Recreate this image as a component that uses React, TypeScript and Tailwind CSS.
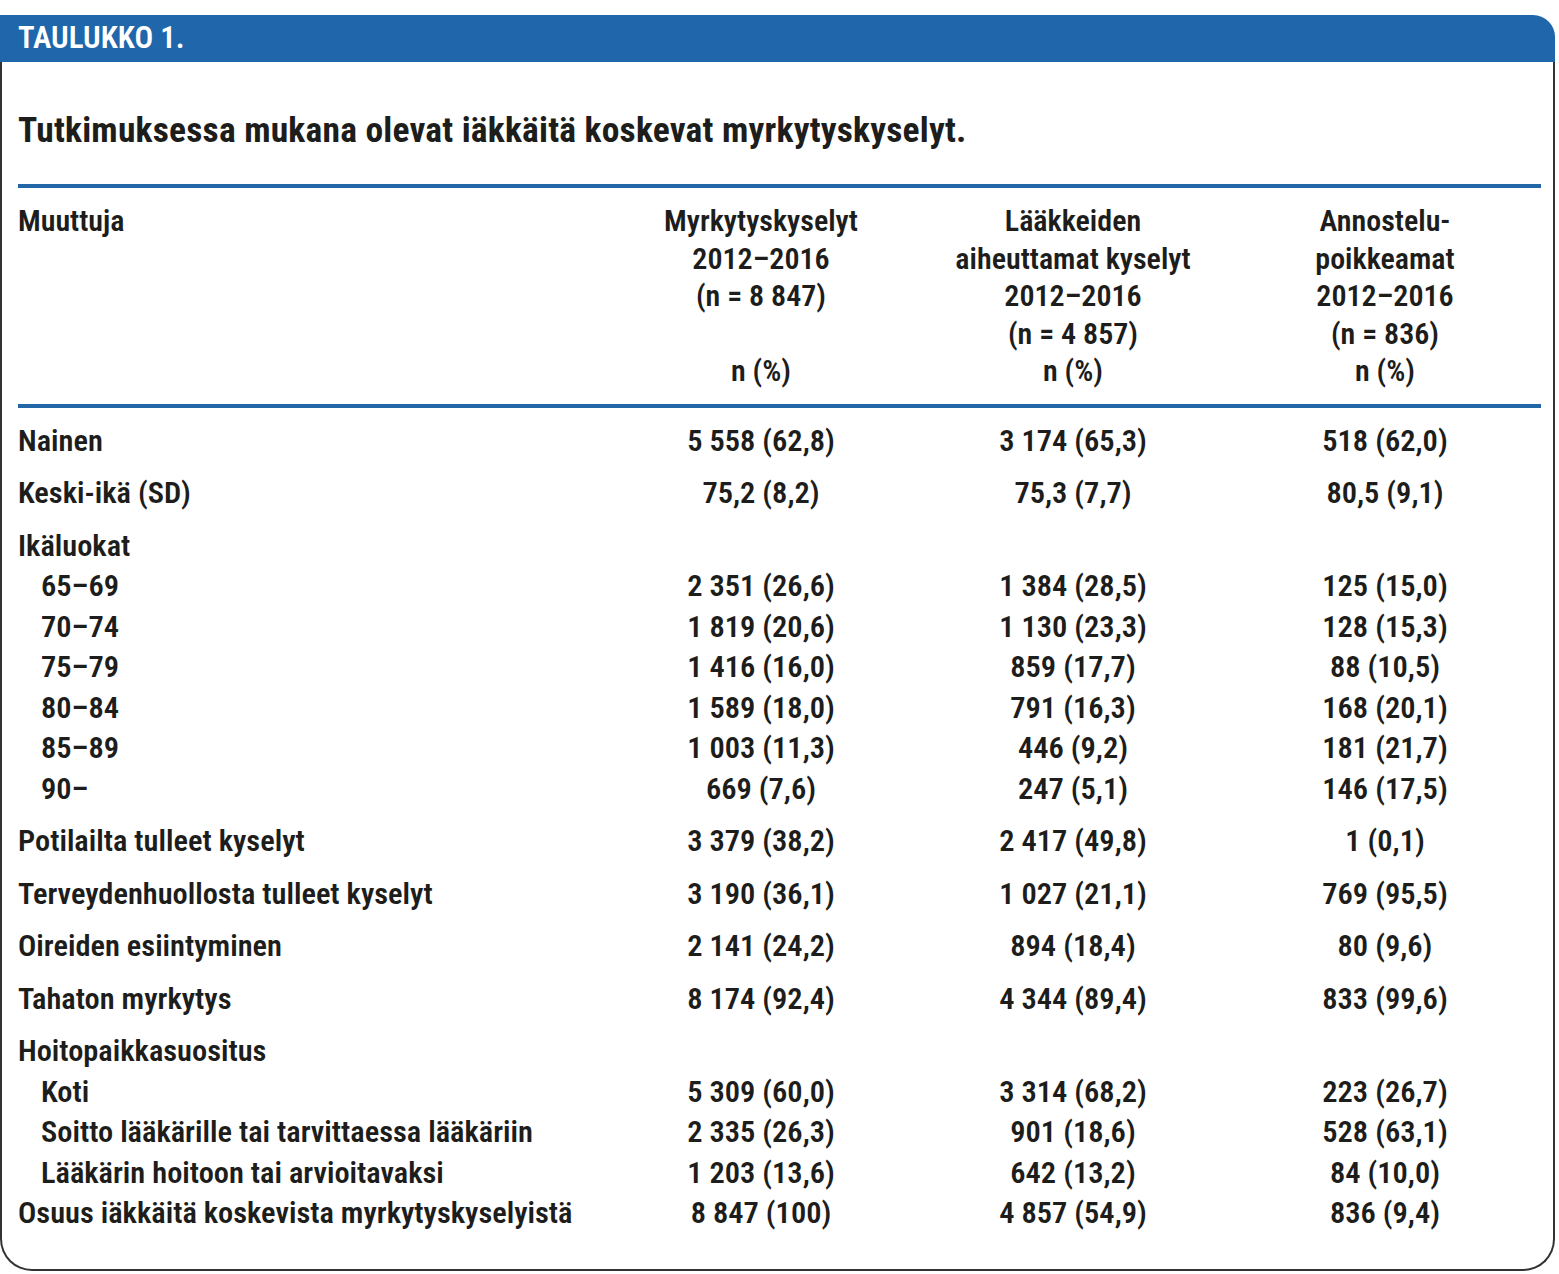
const rows: { label: string; vals: string[]; sub?: boolean; gap?: boolean }[] = [
  { label: 'Nainen', vals: ['5 558 (62,8)', '3 174 (65,3)', '518 (62,0)'] },
  { label: 'Keski-ikä (SD)', vals: ['75,2 (8,2)', '75,3 (7,7)', '80,5 (9,1)'], gap: true },
  { label: 'Ikäluokat', vals: ['', '', ''], gap: true },
  { label: '65–69', vals: ['2 351 (26,6)', '1 384 (28,5)', '125 (15,0)'], sub: true },
  { label: '70–74', vals: ['1 819 (20,6)', '1 130 (23,3)', '128 (15,3)'], sub: true },
  { label: '75–79', vals: ['1 416 (16,0)', '859 (17,7)', '88 (10,5)'], sub: true },
  { label: '80–84', vals: ['1 589 (18,0)', '791 (16,3)', '168 (20,1)'], sub: true },
  { label: '85–89', vals: ['1 003 (11,3)', '446 (9,2)', '181 (21,7)'], sub: true },
  { label: '90–', vals: ['669 (7,6)', '247 (5,1)', '146 (17,5)'], sub: true },
  { label: 'Potilailta tulleet kyselyt', vals: ['3 379 (38,2)', '2 417 (49,8)', '1 (0,1)'], gap: true },
  { label: 'Terveydenhuollosta tulleet kyselyt', vals: ['3 190 (36,1)', '1 027 (21,1)', '769 (95,5)'], gap: true },
  { label: 'Oireiden esiintyminen', vals: ['2 141 (24,2)', '894 (18,4)', '80 (9,6)'], gap: true },
  { label: 'Tahaton myrkytys', vals: ['8 174 (92,4)', '4 344 (89,4)', '833 (99,6)'], gap: true },
  { label: 'Hoitopaikkasuositus', vals: ['', '', ''], gap: true },
  { label: 'Koti', vals: ['5 309 (60,0)', '3 314 (68,2)', '223 (26,7)'], sub: true },
  { label: 'Soitto lääkärille tai tarvittaessa lääkäriin', vals: ['2 335 (26,3)', '901 (18,6)', '528 (63,1)'], sub: true },
  { label: 'Lääkärin hoitoon tai arvioitavaksi', vals: ['1 203 (13,6)', '642 (13,2)', '84 (10,0)'], sub: true },
  { label: 'Osuus iäkkäitä koskevista myrkytyskyselyistä', vals: ['8 847 (100)', '4 857 (54,9)', '836 (9,4)'] },
];

const heads = [
  ['Myrkytyskyselyt', '2012–2016', '(n = 8 847)', '', 'n (%)'],
  ['Lääkkeiden', 'aiheuttamat kyselyt', '2012–2016', '(n = 4 857)', 'n (%)'],
  ['Annostelu-', 'poikkeamat', '2012–2016', '(n = 836)', 'n (%)'],
];

export default function App() {
  return (
    <div className="min-h-[1274px] bg-white pt-[15px] font-['Roboto',sans-serif] font-stretch-condensed text-[#1d1d1b]">
      <div className="w-[1555px]">
        <div className="flex h-[47px] items-center rounded-tr-[22px] bg-[#1f66ab] pl-[18px] text-[31px] font-semibold text-white">
          TAULUKKO 1.
        </div>
        <div className="h-[1209px] rounded-b-[32px] border-x-2 border-b-2 border-[#333]">
          <h1 className="pl-[16px] pt-[48px] text-[35.5px] font-bold leading-[40px] tracking-[0.2px]">
            Tutkimuksessa mukana olevat iäkkäitä koskevat myrkytyskyselyt.
          </h1>
          <div className="ml-[16px] mt-[34px] w-[1523px]">
            <div className="h-[4px] bg-[#2467a9]" />
            <div className="grid grid-cols-[587px_312px_312px_312px] py-[14px] text-[30px] font-semibold leading-[37.5px]">
              <div>Muuttuja</div>
              {heads.map((h, i) => (
                <div key={i} className="text-center">
                  {h.map((l, j) => (
                    <div key={j} className="h-[37.5px]">{l}</div>
                  ))}
                </div>
              ))}
            </div>
            <div className="h-[4px] bg-[#2467a9]" />
            <div className="pt-[13px] text-[30.4px] font-semibold leading-[40.5px]">
              {rows.map((r, i) => (
                <div
                  key={i}
                  className={`grid grid-cols-[587px_312px_312px_312px] ${r.gap ? 'pt-[12px]' : ''}`}
                >
                  <div className={r.sub ? 'pl-[23px]' : ''}>{r.label}</div>
                  {r.vals.map((v, j) => (
                    <div key={j} className="text-center">{v}</div>
                  ))}
                </div>
              ))}
            </div>
          </div>
        </div>
      </div>
    </div>
  );
}
